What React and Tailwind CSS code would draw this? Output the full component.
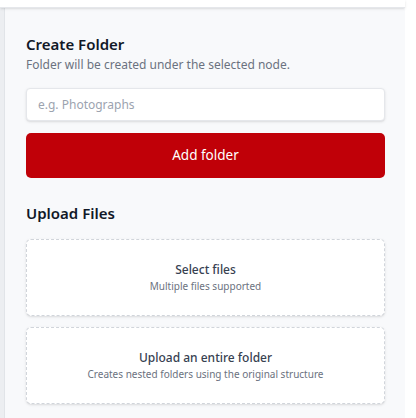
export default function App() {
  return (
    <div
      className="w-[416px] h-[418px] bg-white overflow-hidden"
      style={{ fontFamily: '"Segoe UI", "Noto Sans", "Open Sans", sans-serif' }}
    >
      <div className="w-[405px] h-[8px] bg-white border-b border-gray-200 shadow-sm relative z-10" />
      <div className="w-[405px] h-[410px] bg-[#f8f9fb] border-l-4 border-l-[#eceef1] flex">
        <div className="flex-1 border-l border-[#e1e4e8] pl-[21px] pr-[20px] pt-[25px]">
          <h2 className="text-[15px] font-semibold text-[#111827] leading-[22px]">Create Folder</h2>
          <p className="text-[12px] text-[#6b7280] leading-[18px] mt-[1px]">
            Folder will be created under the selected node.
          </p>
          <input
            type="text"
            placeholder="e.g. Photographs"
            className="mt-[14px] w-full h-[33px] px-[11px] text-[12px] bg-white border border-[#e5e7eb] rounded-[4px] shadow-sm placeholder-[#9ca3af] focus:outline-none"
          />
          <button className="mt-[12px] w-full h-[45px] bg-[#c00008] text-white text-[13.5px] rounded-[5px]">
            Add folder
          </button>

          <h2 className="mt-[24px] text-[15px] font-semibold text-[#111827] leading-[22px]">Upload Files</h2>

          <div className="mt-[15px] flex flex-col gap-[11px]">
            <button className="w-full h-[77px] bg-white border border-dashed border-[#d1d5db] rounded-[5px] shadow-sm flex flex-col items-center justify-center">
              <span className="text-[12px] font-medium text-[#374151] leading-[16px]">Select files</span>
              <span className="text-[10px] text-[#6b7280] leading-[14px] mt-[1px]">Multiple files supported</span>
            </button>
            <button className="w-full h-[77px] bg-white border border-dashed border-[#d1d5db] rounded-[5px] shadow-sm flex flex-col items-center justify-center">
              <span className="text-[12px] font-medium text-[#374151] leading-[16px]">Upload an entire folder</span>
              <span className="text-[10px] text-[#6b7280] leading-[14px] mt-[1px]">Creates nested folders using the original structure</span>
            </button>
          </div>
        </div>
      </div>
    </div>
  )
}
